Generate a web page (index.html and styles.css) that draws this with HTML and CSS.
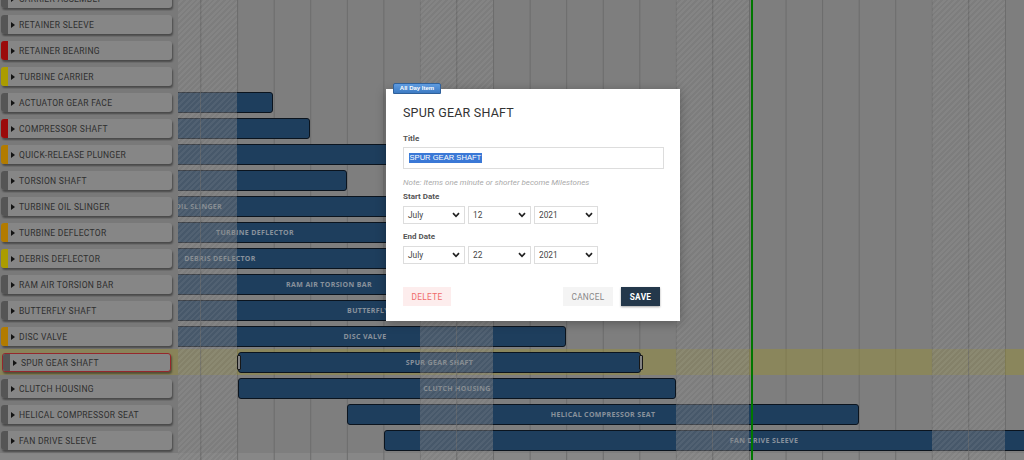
FILE: index.html
```html
<!DOCTYPE html>
<html>
<head>
<meta charset="utf-8">
<link rel="stylesheet" href="styles.css">
</head>
<body>
<div class="app">
  <div class="panel">
    <div class="rows">
      <div class="label-row"><div class="label"><span class="stripe gray"></span><span class="tri"></span><span class="name">CARRIER ASSEMBLY</span></div></div>
      <div class="label-row"><div class="label"><span class="stripe gray"></span><span class="tri"></span><span class="name">RETAINER SLEEVE</span></div></div>
      <div class="label-row"><div class="label"><span class="stripe red"></span><span class="tri"></span><span class="name">RETAINER BEARING</span></div></div>
      <div class="label-row"><div class="label"><span class="stripe yellow"></span><span class="tri"></span><span class="name">TURBINE CARRIER</span></div></div>
      <div class="label-row"><div class="label"><span class="stripe gray"></span><span class="tri"></span><span class="name">ACTUATOR GEAR FACE</span></div></div>
      <div class="label-row"><div class="label"><span class="stripe red"></span><span class="tri"></span><span class="name">COMPRESSOR SHAFT</span></div></div>
      <div class="label-row"><div class="label"><span class="stripe orange"></span><span class="tri"></span><span class="name">QUICK-RELEASE PLUNGER</span></div></div>
      <div class="label-row"><div class="label"><span class="stripe gray"></span><span class="tri"></span><span class="name">TORSION SHAFT</span></div></div>
      <div class="label-row"><div class="label"><span class="stripe gray"></span><span class="tri"></span><span class="name">TURBINE OIL SLINGER</span></div></div>
      <div class="label-row"><div class="label"><span class="stripe orange"></span><span class="tri"></span><span class="name">TURBINE DEFLECTOR</span></div></div>
      <div class="label-row"><div class="label"><span class="stripe yellow"></span><span class="tri"></span><span class="name">DEBRIS DEFLECTOR</span></div></div>
      <div class="label-row"><div class="label"><span class="stripe gray"></span><span class="tri"></span><span class="name">RAM AIR TORSION BAR</span></div></div>
      <div class="label-row"><div class="label"><span class="stripe gray"></span><span class="tri"></span><span class="name">BUTTERFLY SHAFT</span></div></div>
      <div class="label-row"><div class="label"><span class="stripe orange"></span><span class="tri"></span><span class="name">DISC VALVE</span></div></div>
      <div class="label-row selected"><div class="label active"><span class="stripe gray"></span><span class="tri"></span><span class="name">SPUR GEAR SHAFT</span></div></div>
      <div class="label-row"><div class="label"><span class="stripe gray"></span><span class="tri"></span><span class="name">CLUTCH HOUSING</span></div></div>
      <div class="label-row"><div class="label"><span class="stripe gray"></span><span class="tri"></span><span class="name">HELICAL COMPRESSOR SEAT</span></div></div>
      <div class="label-row"><div class="label"><span class="stripe gray"></span><span class="tri"></span><span class="name">FAN DRIVE SLEEVE</span></div></div>
    </div>
  </div>

  <div class="timeline">
    <div class="rows">
      <div class="bar-row"></div>
      <div class="bar-row"></div>
      <div class="bar-row"></div>
      <div class="bar-row"></div>
      <div class="bar-row"><div class="bar" style="left:-478px;width:573px"></div></div>
      <div class="bar-row"><div class="bar" style="left:-528px;width:660px"></div></div>
      <div class="bar-row"><div class="bar" style="left:-578px;width:820px"></div></div>
      <div class="bar-row"><div class="bar" style="left:-528px;width:697px"></div></div>
      <div class="bar-row"><div class="bar" style="left:-309px;width:624px"><span class="bar-text">TURBINE OIL SLINGER</span></div></div>
      <div class="bar-row"><div class="bar" style="left:-124px;width:402px"><span class="bar-text">TURBINE DEFLECTOR</span></div></div>
      <div class="bar-row"><div class="bar" style="left:-158px;width:400px"><span class="bar-text">DEBRIS DEFLECTOR</span></div></div>
      <div class="bar-row"><div class="bar" style="left:-13px;width:328px"><span class="bar-text">RAM AIR TORSION BAR</span></div></div>
      <div class="bar-row"><div class="bar" style="left:-56px;width:518px"><span class="bar-text">BUTTERFLY SHAFT</span></div></div>
      <div class="bar-row"><div class="bar" style="left:-14px;width:402px"><span class="bar-text">DISC VALVE</span></div></div>
      <div class="bar-row selected"><div class="bar editing" style="left:60px;width:403px"><span class="handle left"></span><span class="bar-text">SPUR GEAR SHAFT</span><span class="handle right"></span></div></div>
      <div class="bar-row"><div class="bar" style="left:60px;width:438px"><span class="bar-text">CLUTCH HOUSING</span></div></div>
      <div class="bar-row"><div class="bar" style="left:169px;width:512px"><span class="bar-text">HELICAL COMPRESSOR SEAT</span></div></div>
      <div class="bar-row"><div class="bar" style="left:206px;width:760px"><span class="bar-text">FAN DRIVE SLEEVE</span></div></div>
    </div>
    <div class="weekends">
      <div class="week"><div class="weekend"></div></div>
      <div class="week"><div class="weekend"></div></div>
      <div class="week"><div class="weekend"></div></div>
      <div class="week"><div class="weekend"></div></div>
    </div>
    <div class="today"></div>
  </div>
</div>

<div class="backdrop"></div>

<div class="modal">
  <div class="tag">All Day Item</div>
  <h2 class="modal-title">SPUR GEAR SHAFT</h2>
  <div class="field-label">Title</div>
  <div class="text-input"><span class="selection">SPUR GEAR SHAFT</span></div>
  <div class="note">Note: Items one minute or shorter become Milestones</div>
  <div class="field-label">Start Date</div>
  <div class="date-row">
    <div class="select month"><span>July</span><svg class="chev" width="8" height="6" viewBox="0 0 8 6"><polyline points="1,1.2 4,4.3 7,1.2" fill="none" stroke="#222" stroke-width="1.7"/></svg></div>
    <div class="select day"><span>12</span><svg class="chev" width="8" height="6" viewBox="0 0 8 6"><polyline points="1,1.2 4,4.3 7,1.2" fill="none" stroke="#222" stroke-width="1.7"/></svg></div>
    <div class="select year"><span>2021</span><svg class="chev" width="8" height="6" viewBox="0 0 8 6"><polyline points="1,1.2 4,4.3 7,1.2" fill="none" stroke="#222" stroke-width="1.7"/></svg></div>
  </div>
  <div class="field-label">End Date</div>
  <div class="date-row">
    <div class="select month"><span>July</span><svg class="chev" width="8" height="6" viewBox="0 0 8 6"><polyline points="1,1.2 4,4.3 7,1.2" fill="none" stroke="#222" stroke-width="1.7"/></svg></div>
    <div class="select day"><span>22</span><svg class="chev" width="8" height="6" viewBox="0 0 8 6"><polyline points="1,1.2 4,4.3 7,1.2" fill="none" stroke="#222" stroke-width="1.7"/></svg></div>
    <div class="select year"><span>2021</span><svg class="chev" width="8" height="6" viewBox="0 0 8 6"><polyline points="1,1.2 4,4.3 7,1.2" fill="none" stroke="#222" stroke-width="1.7"/></svg></div>
  </div>
  <div class="actions">
    <button class="btn delete">DELETE</button>
    <div class="right-actions">
      <button class="btn cancel">CANCEL</button>
      <button class="btn save">SAVE</button>
    </div>
  </div>
</div>
</body>
</html>
```

FILE: styles.css
```css
* { box-sizing: border-box; }
html, body { margin: 0; padding: 0; }
body {
  width: 1024px;
  height: 460px;
  overflow: hidden;
  font-family: Roboto, "Liberation Sans", sans-serif;
  position: relative;
}
.app {
  display: flex;
  width: 1024px;
  height: 460px;
  overflow: hidden;
}
.panel {
  flex: 0 0 178px;
  background: #c2c2c2;
  overflow: hidden;
}
.rows { margin-top: -15px; }
.label-row {
  height: 26px;
  padding: 4px 6px 3px 1px;
  background: #aeaeae;
}
.label-row.selected { background: #c4bc80; }
.label {
  height: 19px;
  display: flex;
  align-items: center;
  background: #c0c0c0;
  border-radius: 3px;
  box-shadow: 1px 2px 2px rgba(0,0,0,0.4);
  overflow: hidden;
}
.label.active {
  border: 1.5px solid #d63940;
  margin-left: 1px;
  margin-right: 1px;
}
.stripe {
  flex: 0 0 7px;
  align-self: stretch;
}
.stripe.gray { background: #7a7a7a; }
.stripe.red { background: #de1010; }
.stripe.yellow { background: #f5e000; }
.stripe.orange { background: #ffb000; }
.tri {
  width: 0;
  height: 0;
  margin-left: 3px;
  border-left: 4px solid #1c1c1c;
  border-top: 3.5px solid transparent;
  border-bottom: 3.5px solid transparent;
}
.name {
  margin-left: 4px;
  font-size: 8.5px;
  letter-spacing: 0.3px;
  color: #444;
  white-space: nowrap;
}

.timeline {
  flex: 1;
  position: relative;
  overflow: hidden;
  background:
    linear-gradient(to right, #9a9a9a 0, #9a9a9a 1px, transparent 1px) -14px 0 / 36.5714px 100% repeat-x,
    linear-gradient(to bottom, #b5b5b5 453px, #c2c2c2 453px);
}
.bar-row {
  height: 26px;
  position: relative;
}
.bar-row.selected { background: rgba(225, 210, 60, 0.4); }
.bar {
  position: absolute;
  top: 3px;
  height: 21px;
  background: #2c5986;
  border: 1px solid #111d2b;
  border-radius: 3px;
  display: flex;
  align-items: center;
  justify-content: center;
}
.bar-text {
  font-family: "Open Sans", Roboto, sans-serif;
  font-weight: 700;
  font-size: 7px;
  letter-spacing: 0.35px;
  color: #c3d0de;
  white-space: nowrap;
}
.handle {
  position: absolute;
  top: 2px;
  bottom: 2px;
  width: 4px;
  background: #bcbcbc;
  border: 1px solid #222;
  border-radius: 1px;
}
.handle.left { left: -2px; }
.handle.right { right: -3px; }
.weekends {
  position: absolute;
  top: 0;
  bottom: 0;
  left: -14px;
  display: flex;
  pointer-events: none;
}
.week { flex: 0 0 256px; }
.weekend {
  width: 73.14px;
  height: 100%;
  background:
    repeating-linear-gradient(135deg, rgba(255,255,255,0.07) 0 2px, rgba(0,0,0,0.03) 2px 4px),
    linear-gradient(to right, transparent 36px, rgba(154,154,154,0.6) 36px, rgba(154,154,154,0.6) 37px, transparent 37px),
    rgba(190,190,190,0.42);
}
.today {
  position: absolute;
  top: 0;
  bottom: 0;
  left: 573px;
  width: 2px;
  background: #00ab00;
}

.backdrop {
  position: absolute;
  inset: 0;
  background: rgba(0,0,0,0.3);
}

.modal {
  position: absolute;
  left: 386px;
  top: 89px;
  width: 294px;
  height: 232px;
  background: #fff;
  box-shadow: 0 2px 10px rgba(0,0,0,0.3);
  padding: 0 16px 0 17px;
  display: flex;
  flex-direction: column;
}
.tag {
  position: absolute;
  left: 7px;
  top: -6px;
  width: 48px;
  height: 11px;
  background: linear-gradient(#5e9be0, #3d7bc3);
  border: 1px solid #2f609a;
  border-radius: 2px 2px 0 0;
  color: #fff;
  font-family: "Liberation Sans", sans-serif;
  font-weight: 700;
  font-size: 6px;
  line-height: 9px;
  text-align: center;
}
.modal-title {
  margin: 16px 0 0 0;
  font-weight: 400;
  font-size: 12.5px;
  line-height: 16px;
  color: #333;
  letter-spacing: 0.2px;
}
.field-label {
  font-weight: 700;
  font-size: 8px;
  line-height: 10px;
  color: #555;
  margin-top: 13px;
}
.text-input {
  margin-top: 3px;
  height: 22px;
  width: 261px;
  border: 1px solid #ddd;
  display: flex;
  align-items: center;
  padding-left: 5px;
}
.selection {
  background: #3a78d6;
  color: #fff;
  font-family: "Liberation Sans", sans-serif;
  font-size: 7.6px;
  line-height: 10px;
  padding: 0 0.5px;
}
.note {
  margin-top: 9px;
  font-style: italic;
  font-size: 8px;
  line-height: 10px;
  color: #aaa;
}
.note + .field-label { margin-top: 4px; }
.date-row {
  margin-top: 4px;
  display: flex;
  gap: 3px;
}
.select {
  height: 18px;
  border: 1px solid #ddd;
  display: flex;
  align-items: center;
  justify-content: space-between;
  padding: 0 4px 0 4px;
  font-size: 8.3px;
  color: #444;
}
.select.month { width: 62px; }
.select.day { width: 63px; }
.select.year { width: 64px; }
.date-row + .field-label { margin-top: 8px; }
.chev { display: block; }
.actions {
  margin-top: 23px;
  display: flex;
  justify-content: space-between;
  width: 257px;
}
.right-actions {
  display: flex;
  gap: 8px;
}
.btn {
  height: 19px;
  border: none;
  font-family: Roboto, "Liberation Sans", sans-serif;
  font-size: 8.3px;
  letter-spacing: 0.3px;
  padding: 0;
  cursor: pointer;
}
.btn.delete {
  width: 48px;
  background: #fdeded;
  color: #f06a6a;
}
.btn.cancel {
  width: 50px;
  background: #f4f4f4;
  color: #888;
}
.btn.save {
  width: 39px;
  background: #24384b;
  color: #fff;
  font-weight: 700;
  box-shadow: 0 1px 2px rgba(0,0,0,0.35);
}
```
